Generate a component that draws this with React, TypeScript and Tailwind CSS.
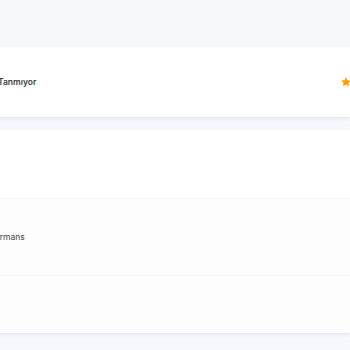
import React from 'react';

const Star: React.FC = () => (
  <svg viewBox="0 0 24 24" className="w-[12px] h-[12px] -mr-[2px]" fill="#f5a30a">
    <path d="M12 2l3 6.3 6.8.8-5 4.7 1.3 6.8L12 17.2l-6.1 3.4 1.3-6.8-5-4.7 6.8-.8z" />
  </svg>
);

const App: React.FC = () => {
  return (
    <div
      className="min-h-screen bg-[#f7f8fc] overflow-hidden"
      style={{ fontFamily: 'Inter, "Noto Sans", sans-serif' }}
    >
      <div className="pt-[47px] -ml-[40px] w-[calc(100%+40px)] flex flex-col">
        <div className="bg-white h-[70px] flex items-center justify-between pl-[38px] pr-0 shadow-[0_2px_3px_rgba(200,205,225,0.4)]">
          <span className="text-[8.5px] font-semibold text-[#3a3a3a]">Tanmıyor</span>
          <Star />
        </div>

        <div className="mt-[13px] bg-white flex flex-col shadow-[0_2px_3px_rgba(200,205,225,0.4)]">
          <div className="h-[69px] border-b border-[#f3f4f6]" />
          <div className="h-[77px] bg-[#fdfdfe] border-b border-[#f3f4f6] flex items-center pl-[18px]">
            <span className="text-[8.5px] text-[#444]">Performans</span>
          </div>
          <div className="h-[57px] bg-[#fdfdfe]" />
        </div>
      </div>
    </div>
  );
};

export default App;
